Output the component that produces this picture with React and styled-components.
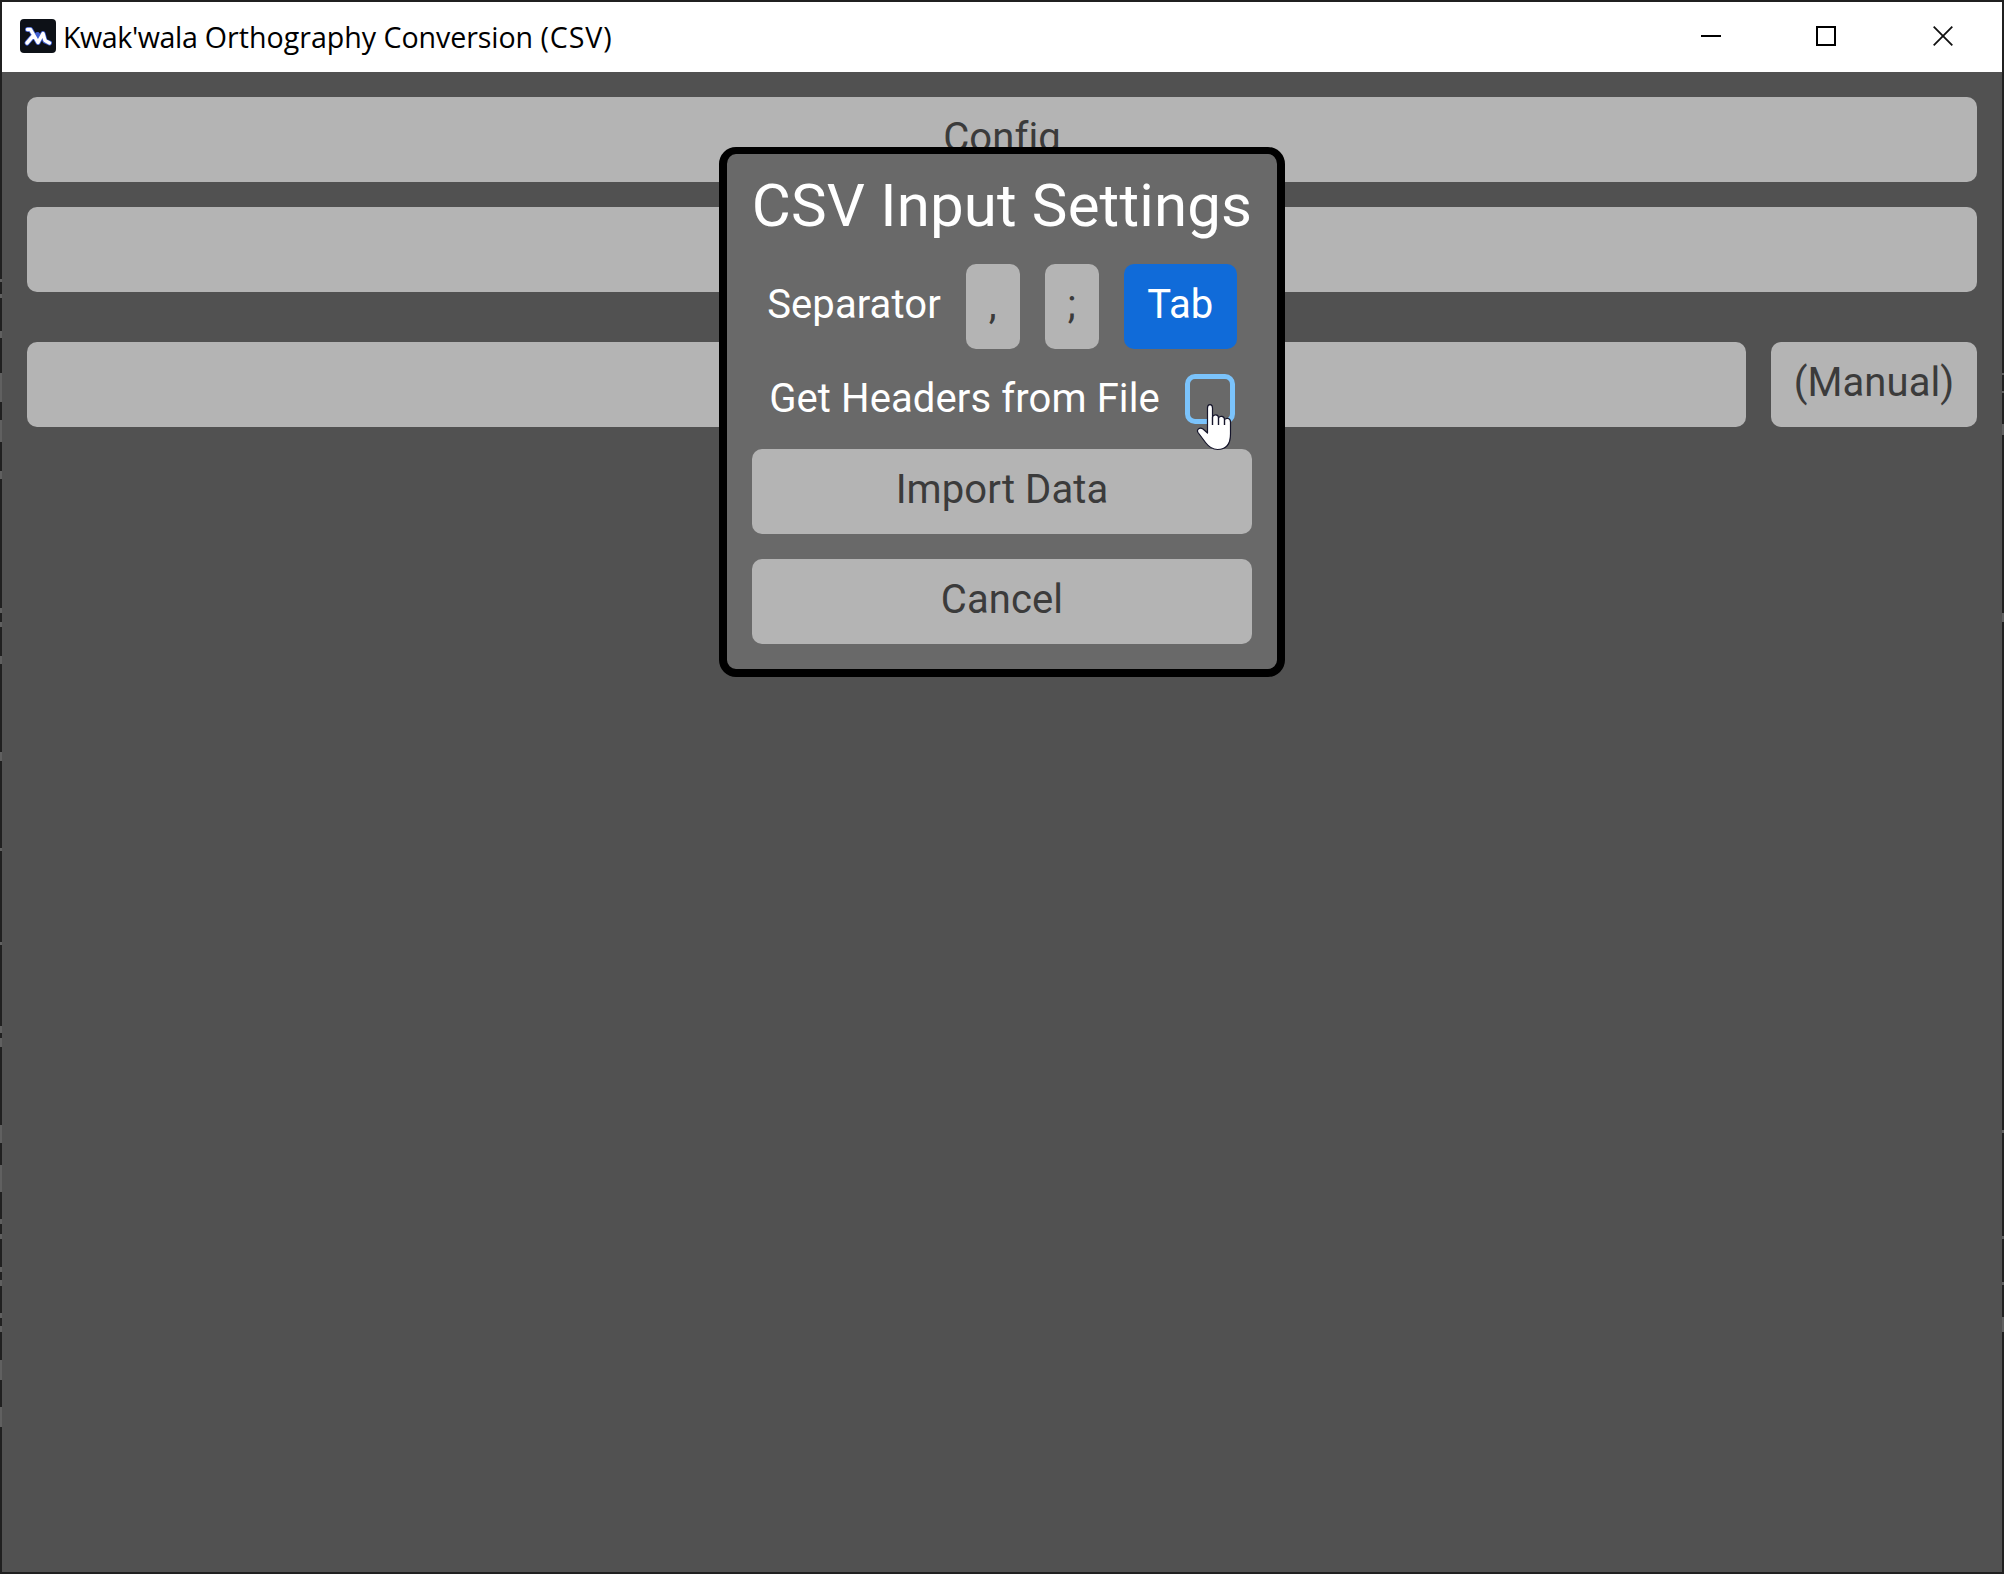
import React from "react";
import styled, { createGlobalStyle } from "styled-components";

const GlobalStyle = createGlobalStyle`
  * { box-sizing: border-box; }
  html, body { margin: 0; padding: 0; background: #202020; }
  button { border: 0; margin: 0; font: inherit; letter-spacing: inherit; }
`;

const Window = styled.div`
  position: relative;
  display: flex;
  flex-direction: column;
  width: 2004px;
  height: 1574px;
  padding: 2px;
  background: #202020;
  font-family: Roboto, "Liberation Sans", sans-serif;
  font-size: 40px;
  line-height: 48px;
  letter-spacing: 0.1px;
  overflow: hidden;
`;

/* Slivers of the desktop content visible beside the window's edges. */
const EdgeMark = styled.i`
  position: absolute;
  ${(p) => (p.$side === "left" ? "left: 0;" : "right: 0;")}
  width: 2px;
  background: #606060;
`;

const leftMarks = [
  [279, 3], [294, 4], [331, 7], [373, 29], [420, 22], [471, 8], [608, 5], [622, 5],
  [656, 8], [752, 9], [848, 3], [942, 3], [1026, 7], [1038, 9], [1125, 18],
  [1165, 27], [1219, 5], [1234, 5], [1267, 5], [1280, 6], [1313, 5], [1326, 6],
  [1360, 20], [1407, 20],
];
const rightMarks = [
  [373, 2], [391, 2], [424, 11], [613, 9], [1130, 3], [1236, 3], [1282, 3], [1317, 15],
];

const TitleBar = styled.header`
  display: flex;
  align-items: center;
  flex: none;
  height: 70px;
  padding: 0 0 2px 18px;
  background: #fff;
  color: #000;
`;

const AppIcon = styled.svg`
  flex: none;
  width: 36px;
  height: 34px;
`;

const WindowTitle = styled.div`
  flex: 1;
  padding: 2px 0 0 7px;
  font-family: "Open Sans", "Noto Sans", sans-serif;
  font-size: 28.6px;
  line-height: 40px;
  letter-spacing: 0;
  white-space: nowrap;
`;

const Word = styled.span`
  letter-spacing: ${(p) => p.$track}px;
`;

const CaptionIcon = styled.svg`
  flex: none;
  width: 20px;
  height: 20px;
  margin-right: ${(p) => p.$gap}px;
`;

const Body = styled.main`
  display: flex;
  flex-direction: column;
  flex: 1;
  padding: 25px;
  background: #515151;
`;

const Row = styled.div`
  display: flex;
  gap: 25px;
  margin-bottom: ${(p) => p.$after || 0}px;
`;

const Button = styled.button`
  flex: ${(p) => (p.$grow ? "1" : "none")};
  width: ${(p) => (p.$width ? `${p.$width}px` : "auto")};
  height: 85px;
  padding: 0 0 4px;
  border-radius: 10px;
  background: ${(p) => (p.$selected ? "#106bd9" : "#b4b4b4")};
  color: ${(p) => (p.$selected ? "#fff" : "#3b3b3b")};
  text-align: center;
  white-space: nowrap;
`;

const Dialog = styled.section`
  position: absolute;
  left: 719px;
  top: 147px;
  display: flex;
  flex-direction: column;
  width: 566px;
  height: 530px;
  padding: 16px 25px 25px;
  border: 8px solid #000;
  border-top-width: 7px;
  border-radius: 17px;
  background: #696969;
  color: #fff;
`;

const DialogTitle = styled.h1`
  margin: 0 -10px 22.3px;
  font-size: 60px;
  font-weight: 400;
  line-height: 72px;
  letter-spacing: 0.15px;
  text-align: center;
  white-space: nowrap;
`;

const Field = styled.div`
  display: flex;
  justify-content: center;
  align-items: center;
  gap: 25px;
  margin-bottom: 25px;
`;

const Label = styled.span`
  position: relative;
  top: ${(p) => p.$shift}px;
  white-space: nowrap;
`;

const Checkbox = styled.div`
  width: 50px;
  height: 50px;
  border: 5px solid #7bc3fb;
  border-radius: 10px;
`;

const Actions = styled.div`
  display: flex;
  flex-direction: column;
  gap: 25px;
`;

const Pointer = styled.svg`
  position: absolute;
  left: 1196px;
  top: 403px;
  width: 36px;
  height: 48px;
`;

export default function App() {
  return (
    <>
      <GlobalStyle />
      <Window>
        {leftMarks.map(([top, height]) => (
          <EdgeMark key={`l${top}`} $side="left" style={{ top, height }} />
        ))}
        {rightMarks.map(([top, height]) => (
          <EdgeMark key={`r${top}`} $side="right" style={{ top, height }} />
        ))}
        <TitleBar>
          <AppIcon viewBox="0 0 36 34">
            <rect width="36" height="34" rx="4" fill="#0d1117" />
            <g fill="none" strokeLinejoin="round" strokeLinecap="round">
              <path
                d="M7.5 10.5H10.5L18 23.5L23 14.5L25 22L29.5 24M13 17L7 24M17.5 15.5L20 20"
                stroke="#3f5fd0" strokeWidth="5"
              />
              <path
                d="M7.5 10.5H10.5L18 23.5L23 14.5L25 21.5L29.5 24M13 17L7 24"
                stroke="#fff" strokeWidth="3.5"
              />
            </g>
          </AppIcon>
          <WindowTitle>
            <Word $track={-0.4}>Kwak'wala</Word> <Word $track={0}>Orthography</Word>{" "}
            <Word $track={-0.1}>Conversion</Word> <Word $track={0.9}>(CSV)</Word>
          </WindowTitle>
          <CaptionIcon $gap={95} viewBox="0 0 20 20">
            <path d="M0 10H20" stroke="#000" strokeWidth="2" />
          </CaptionIcon>
          <CaptionIcon $gap={97} viewBox="0 0 20 20">
            <rect x="1" y="1" width="18" height="18" fill="none" stroke="#000" strokeWidth="2" />
          </CaptionIcon>
          <CaptionIcon $gap={49} viewBox="0 0 20 20">
            <path d="M.7 .7L19.3 19.3M19.3 .7L.7 19.3" stroke="#111" strokeWidth="1.8" />
          </CaptionIcon>
        </TitleBar>
        <Body>
          <Row $after={25}><Button $grow>Config</Button></Row>
          <Row $after={50}><Button $grow /></Row>
          <Row>
            <Button $grow />
            <Button $width={206}>(Manual)</Button>
          </Row>
        </Body>
        <Dialog>
          <DialogTitle>CSV Input Settings</DialogTitle>
          <Field>
            <Label $shift={-1.5}>Separator</Label>
            <Button $width={54}>,</Button>
            <Button $width={54}>;</Button>
            <Button $width={113} $selected>Tab</Button>
          </Field>
          <Field>
            <Label $shift={0}>Get Headers from File</Label>
            <Checkbox />
          </Field>
          <Actions>
            <Button>Import Data</Button>
            <Button>Cancel</Button>
          </Actions>
        </Dialog>
        <Pointer viewBox="0 0 36 48">
          <path
            d="M11.5 26.5V5C11.5 .6 16.5 .6 16.5 5V14C17.5 11 22.5 11 22.5 15C24 12.3 28.5 12.8 28.5 16.7C30.5 14.3 34.5 15 34.5 19V31C34.5 42 29 46.5 21.5 46.5C16 46.5 12.5 43.5 9.5 39.5L2 29.5C.2 26.5 3.8 23.8 7 26L11.5 30Z"
            fill="#fff" stroke="#15152b" strokeWidth="1.2" strokeLinejoin="round"
          />
          <path d="M16.5 14V22M22.5 15V22M28.5 16.7V22" stroke="#15152b" strokeWidth="1.4" />
        </Pointer>
      </Window>
    </>
  );
}
